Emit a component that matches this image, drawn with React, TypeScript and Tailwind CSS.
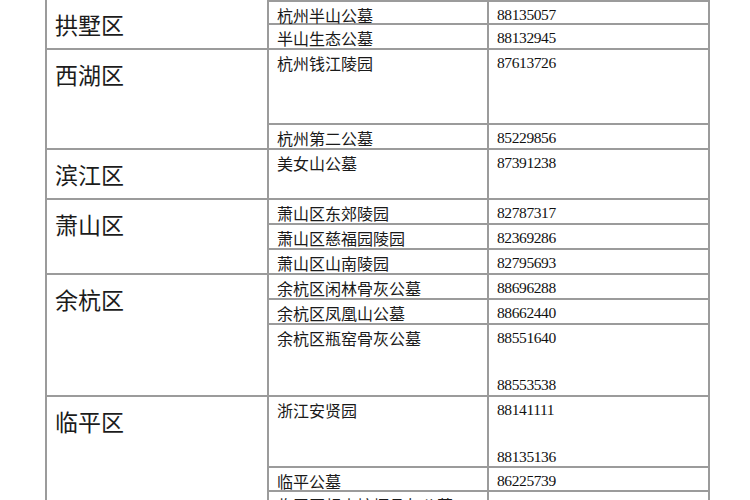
import React from "react";

type Entry = { name: string; phone: string };
type District = { district: string; entries: Entry[] };

const data: District[] = [
  {
    district: "拱墅区",
    entries: [
      { name: "杭州半山公墓", phone: "88135057" },
      { name: "半山生态公墓", phone: "88132945" },
    ],
  },
  {
    district: "西湖区",
    entries: [
      { name: "杭州钱江陵园", phone: "87613726" },
      { name: "杭州第二公墓", phone: "85229856" },
    ],
  },
  {
    district: "滨江区",
    entries: [{ name: "美女山公墓", phone: "87391238" }],
  },
  {
    district: "萧山区",
    entries: [
      { name: "萧山区东郊陵园", phone: "82787317" },
      { name: "萧山区慈福园陵园", phone: "82369286" },
      { name: "萧山区山南陵园", phone: "82795693" },
    ],
  },
  {
    district: "余杭区",
    entries: [
      { name: "余杭区闲林骨灰公墓", phone: "88696288" },
      { name: "余杭区凤凰山公墓", phone: "88662440" },
      { name: "余杭区瓶窑骨灰公墓", phone: "88551640\n\n88553538" },
    ],
  },
  {
    district: "临平区",
    entries: [
      { name: "浙江安贤园", phone: "88141111\n\n88135136" },
      { name: "临平公墓", phone: "86225739" },
      { name: "临平区超山塘栖骨灰公墓", phone: "86188048" },
    ],
  },
];

const spans: Record<number, string> = {
  1: "row-span-1",
  2: "row-span-2",
  3: "row-span-3",
};

const cjk = "font-['Noto_Sans_CJK_SC','Noto_Sans',sans-serif]";
const serif = "font-['Liberation_Serif','Times_New_Roman',serif]";

export default function App() {
  return (
    <div className="w-[750px] h-[500px] overflow-hidden bg-white">
      {/* row heights follow the ruled lines of the scanned table */}
      <div className="ml-[45px] grid grid-cols-[222px_220px_221px] grid-rows-[25px_25px_75px_25px_50px_25px_25px_25px_25px_25px_72px_71px_24px_25px] border-l-2 border-[#9b9b9b]">
        {data.map((d, di) => (
          <React.Fragment key={d.district}>
            <div
              className={`${spans[d.entries.length]} border-r-2 border-b-2 border-[#9b9b9b] pl-[8px] pt-[8px] text-[23px] leading-[32px] text-[#1c1c1c] ${cjk}`}
            >
              {d.district}
            </div>
            {d.entries.map((e, ei) => {
              const first = di === 0 && ei === 0;
              return (
                <React.Fragment key={e.name}>
                  <div
                    className={`border-r-2 border-b-2 border-[#9b9b9b] pl-[8px] pt-[2px] text-[16px] leading-[23.5px] text-[#1a1a1a] whitespace-nowrap ${cjk} ${
                      first ? "border-t-2" : ""
                    }`}
                  >
                    {e.name}
                  </div>
                  <div
                    className={`border-r-2 border-b-2 border-[#9b9b9b] pl-[8px] pt-[1px] text-[15.5px] leading-[23.5px] text-[#111] whitespace-pre-line tracking-[-0.4px] ${serif} ${
                      first ? "border-t-2" : ""
                    }`}
                  >
                    {e.phone}
                  </div>
                </React.Fragment>
              );
            })}
          </React.Fragment>
        ))}
      </div>
    </div>
  );
}
